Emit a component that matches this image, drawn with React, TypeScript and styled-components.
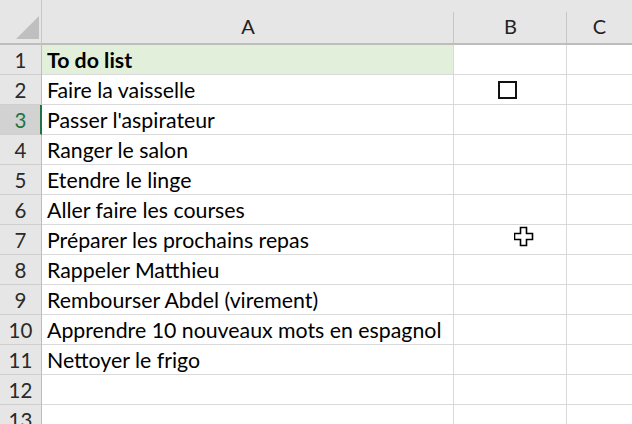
import React from "react";
import styled, { createGlobalStyle } from "styled-components";

const Global = createGlobalStyle`
  html, body { margin: 0; padding: 0; background: #ffffff; overflow: hidden; }
  #root { width: 632px; height: 424px; overflow: hidden; position: relative; }
`;

const Sheet = styled.div`
  display: grid;
  grid-template-columns: 42px 412px 113px 65px;
  grid-auto-rows: 30px;
  grid-template-rows: 45px;
  font-family: Lato, "Liberation Sans", sans-serif;
  color: #000;
  width: 632px;
`;

const Corner = styled.div`
  background: #e6e6e6;
  border-right: 1px solid #c6c6c6;
  border-bottom: 2px solid #bdbdbd;
  box-sizing: border-box;
  position: relative;
`;

const ColHead = styled.div<{ $last?: boolean }>`
  background: #e6e6e6;
  border-bottom: 2px solid #bdbdbd;
  box-sizing: border-box;
  display: flex;
  align-items: center;
  justify-content: center;
  font-size: 20px;
  color: #222;
  padding-top: 8px;
  position: relative;
  &::after {
    content: "";
    position: absolute;
    right: 0;
    top: 12px;
    bottom: 0;
    width: 1px;
    background: ${(p) => (p.$last ? "transparent" : "#c6c6c6")};
  }
`;

const RowHead = styled.div<{ $active?: boolean }>`
  background: ${(p) => (p.$active ? "#d2d2d2" : "#e6e6e6")};
  color: ${(p) => (p.$active ? "#217346" : "#2a2a2a")};
  border-right: ${(p) => (p.$active ? "2px solid #217346" : "1px solid #bdbdbd")};
  border-bottom: 1px solid #cfcfcf;
  box-sizing: border-box;
  display: flex;
  align-items: center;
  justify-content: center;
  font-size: 20.5px;
  padding-left: ${(p) => (p.$active ? "1px" : "0")};
`;

const Cell = styled.div<{ $fill?: boolean; $bold?: boolean; $noRight?: boolean }>`
  background: ${(p) => (p.$fill ? "#e2efda" : "#ffffff")};
  border-bottom: 1px solid #d9d9d9;
  border-right: ${(p) => (p.$noRight ? "none" : "1px solid #d9d9d9")};
  box-sizing: border-box;
  display: flex;
  align-items: center;
  padding-left: 5px;
  font-size: 21.3px;
  font-weight: ${(p) => (p.$bold ? 700 : 400)};
  white-space: nowrap;
  overflow: visible;
`;

const CheckCell = styled(Cell)`
  padding-left: 44px;
`;

const Box = styled.div`
  width: 19px;
  height: 18px;
  border: 2px solid #111;
  box-sizing: border-box;
`;

const Triangle = styled.svg`
  position: absolute;
  left: 16px;
  top: 16px;
`;

const Cursor = styled.svg`
  position: absolute;
  left: 514px;
  top: 226px;
`;

const items = [
  "Faire la vaisselle",
  "Passer l'aspirateur",
  "Ranger le salon",
  "Etendre le linge",
  "Aller faire les courses",
  "Préparer les prochains repas",
  "Rappeler Matthieu",
  "Rembourser Abdel (virement)",
  "Apprendre 10 nouveaux mots en espagnol",
  "Nettoyer le frigo",
  "",
  "",
];

export default function App() {
  return (
    <>
      <Global />
      <Sheet>
        <Corner>
          <Triangle width="24" height="24" viewBox="0 0 24 24">
            <polygon points="0,23 23,23 23,0" fill="#bfbfbf" />
          </Triangle>
        </Corner>
        <ColHead>A</ColHead>
        <ColHead>B</ColHead>
        <ColHead $last>C</ColHead>

        <RowHead>1</RowHead>
        <Cell $fill $bold>To do list</Cell>
        <Cell />
        <Cell $noRight />

        {items.map((t, i) => {
          const n = i + 2;
          return (
            <React.Fragment key={n}>
              <RowHead $active={n === 3}>{n}</RowHead>
              <Cell>{t}</Cell>
              {n === 2 ? (
                <CheckCell>
                  <Box />
                </CheckCell>
              ) : (
                <Cell />
              )}
              <Cell $noRight />
            </React.Fragment>
          );
        })}
      </Sheet>
      <Cursor width="20" height="21" viewBox="0 0 20 21">
        <path
          d="M6.5 1.5 H12.5 V7.5 H18.5 V13.5 H12.5 V19.5 H6.5 V13.5 H0.5 V7.5 H6.5 Z"
          fill="#ffffff"
          stroke="#000"
          strokeWidth="1.6"
          strokeLinejoin="miter"
        />
      </Cursor>
    </>
  );
}
